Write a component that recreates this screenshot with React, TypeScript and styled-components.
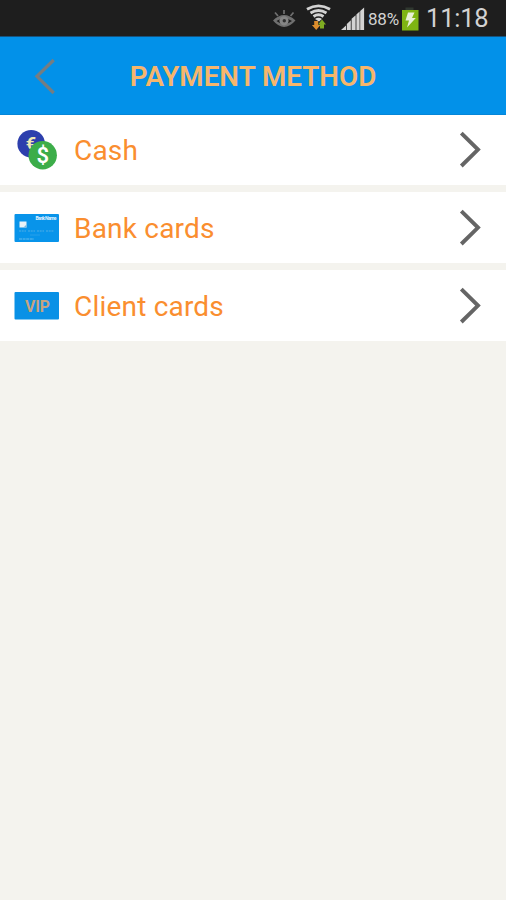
import React from 'react';
import styled, { createGlobalStyle } from 'styled-components';

const GlobalStyle = createGlobalStyle`
  * { box-sizing: border-box; }
  body { margin: 0; background: #f4f3ee; font-family: Roboto, "Liberation Sans", sans-serif; }
  svg { display: block; flex: none; }
`;

const Screen = styled.div`
  width: 506px;
  height: 900px;
  background: #f4f3ee;
  overflow: hidden;
`;

const StatusBar = styled.div`
  height: 37px;
  background: #1e1e1e;
  border-bottom: 1px solid #17537f;
  display: flex;
  align-items: center;
  color: #d2d2d2;
  white-space: nowrap;
`;

const StatusIcons = styled.div`
  width: 368px;
  flex: none;
  display: flex;
  justify-content: flex-end;
`;

const Percent = styled.span`
  width: 33px;
  font-size: 17px;
  letter-spacing: -0.2px;
  line-height: 36px;
  padding-top: 2px;
`;

const Clock = styled.span`
  margin-left: 7px;
  font-size: 25.5px;
  line-height: 36px;
  letter-spacing: -0.2px;
`;

const Header = styled.header`
  height: 78px;
  background: #0291e9;
  border-bottom: 1px solid #0586d8;
  display: grid;
  grid-template-columns: 90px 326px 90px;
  align-items: center;
`;

const BackButton = styled.button`
  border: 0;
  background: none;
  padding: 0 0 0 33px;
`;

const Title = styled.h1`
  margin: 0;
  padding-top: 2px;
  text-align: center;
  font-size: 27.8px;
  font-weight: 600;
  line-height: 32px;
  color: #f6b66c;
  white-space: nowrap;
`;

const List = styled.main`
  display: flex;
  flex-direction: column;
  gap: 7px;
`;

const Row = styled.div`
  height: 71px;
  background: #fff;
  display: flex;
  align-items: center;
  padding: 0 24px 0 14px;

  &:first-child { height: 70px; }
`;

const IconSlot = styled.div`
  width: 60px;
  flex: none;
`;

const Label = styled.span`
  flex: 1;
  padding-top: 2px;
  font-size: 28px;
  line-height: 34px;
  letter-spacing: 0.2px;
  color: #fa8e2f;
`;

const StatusGlyphs = () => (
  <svg width="98" height="36" viewBox="270 0 98 36">
    <path d="M273 20.500Q284 9.500 295.500 20.500Q284 33.500 273 20.500ZM276.500 21Q284 27.500 292 21Q284 15.500 276.500 21Z" fill="#707070" fillRule="evenodd" />
    <path d="M275 12.500l3 3.500M284 10v4M293.500 12.500l-3 3.500" stroke="#707070" strokeWidth="1.700" />
    <circle cx="284" cy="20.800" r="4.600" fill="#858585" />
    <circle cx="284.300" cy="20.800" r="1.700" fill="#303030" />
    <g fill="none" stroke="#d2d2d2" strokeWidth="2.800">
      <path d="M307 9.200Q318.500 2.500 330 9.200" />
      <path d="M310.500 13Q318.500 8 326.500 13" />
      <path d="M313.500 16.500Q318.500 13 323.500 16.500" />
    </g>
    <path d="M315 19Q318.500 16.500 322 19L319 21.500Z" fill="#d8d8d8" />
    <path d="M314.200 21h4v4h2.300l-4.300 5-4.300-5h2.300Z" fill="#dc8d2d" />
    <path d="M320 28.500v-4h-2l4-5 4 5h-2v4Z" fill="#7fac22" />
    <g fill="#d3d3d3">
      <path d="M341 30l5-4.500V30Z" />
      <path d="M346.800 24l4-3.800V30h-4Z" />
      <path d="M351.600 18.800l4-3.600V30h-4Z" />
      <path d="M356.400 14.400l3.200-3V30h-3.200Z" />
      <path d="M360.200 11l3.900-3.500V30h-3.900Z" />
    </g>
  </svg>
);

const Battery = () => (
  <svg width="18" height="36" viewBox="401 0 18 36">
    <path d="M405.500 7.500h8v3h-8Z" fill="#303930" />
    <path d="M402 10h16.500v20.500H402Z" fill="#7eb413" />
    <path d="M408 12.500h6.500l-2.500 5.500h3.800L407 27.500l2-7h-3.500Z" fill="#e7efd6" />
  </svg>
);

const BackChevron = () => (
  <svg width="24" height="38" viewBox="33 56 24 38">
    <path d="M53.700 59L37 75.300L53.700 92" fill="none" stroke="#757d82" strokeWidth="3.300" />
  </svg>
);

const Chevron = () => (
  <svg width="24" height="38" viewBox="458 131 24 38">
    <path d="M461.300 133.200L478 149.600L461.300 166" fill="none" stroke="#656565" strokeWidth="3.900" />
  </svg>
);

const CashIcon = () => (
  <svg width="46" height="42" viewBox="14 129 46 42" fontFamily="Roboto, sans-serif" textAnchor="middle">
    <circle cx="31.200" cy="143.700" r="13.800" fill="#2d3fad" />
    <text x="31" y="149.500" fontSize="18" fontWeight="700" fill="#efe9b5">€</text>
    <circle cx="42.700" cy="155.300" r="14.200" fill="#3cad49" />
    <text x="42.700" y="163" fontSize="22" fontWeight="600" fill="#fff">$</text>
  </svg>
);

const BankCardIcon = () => (
  <svg width="46" height="30" viewBox="14 212.500 46 30" fontFamily="Roboto, sans-serif">
    <rect x="14.500" y="213.500" width="44.500" height="28" rx="1" fill="#0894ea" />
    <text x="35.500" y="219.800" fontSize="5" fontWeight="700" fill="#e2f3ff" textLength="21">Bank Name</text>
    <path d="M19.500 221h7v6h-7Z" fill="#e8f2f8" />
    <path d="M23.500 227l3-3v3Z" fill="#77b7df" />
    <path d="M19 230.500h7m2 0h7m2 0h7m2 0h8" stroke="#39a5e8" strokeWidth="1.500" strokeDasharray="2 .7" />
    <path d="M30 234.500h10" stroke="#269fea" strokeWidth="1" />
    <path d="M19 238.500h15" stroke="#67bbec" strokeWidth="1.200" strokeDasharray="3 .6" />
  </svg>
);

const VipIcon = () => (
  <svg width="46" height="30" viewBox="14 290.500 46 30" fontFamily="Roboto, sans-serif">
    <rect x="14.500" y="291.500" width="44.500" height="27.500" rx="1" fill="#0991e6" />
    <text x="25" y="311.300" fontSize="17" fontWeight="700" fill="#c5a480" textLength="25" lengthAdjust="spacingAndGlyphs">VIP</text>
  </svg>
);

const methods = [
  { label: 'Cash', icon: <CashIcon /> },
  { label: 'Bank cards', icon: <BankCardIcon /> },
  { label: 'Client cards', icon: <VipIcon /> },
];

export default function App() {
  return (
    <Screen>
      <GlobalStyle />
      <StatusBar>
        <StatusIcons><StatusGlyphs /></StatusIcons>
        <Percent>88%</Percent>
        <Battery />
        <Clock>11:18</Clock>
      </StatusBar>
      <Header>
        <BackButton aria-label="Back"><BackChevron /></BackButton>
        <Title>PAYMENT METHOD</Title>
      </Header>
      <List>
        {methods.map((m) => (
          <Row key={m.label}>
            <IconSlot>{m.icon}</IconSlot>
            <Label>{m.label}</Label>
            <Chevron />
          </Row>
        ))}
      </List>
    </Screen>
  );
}
